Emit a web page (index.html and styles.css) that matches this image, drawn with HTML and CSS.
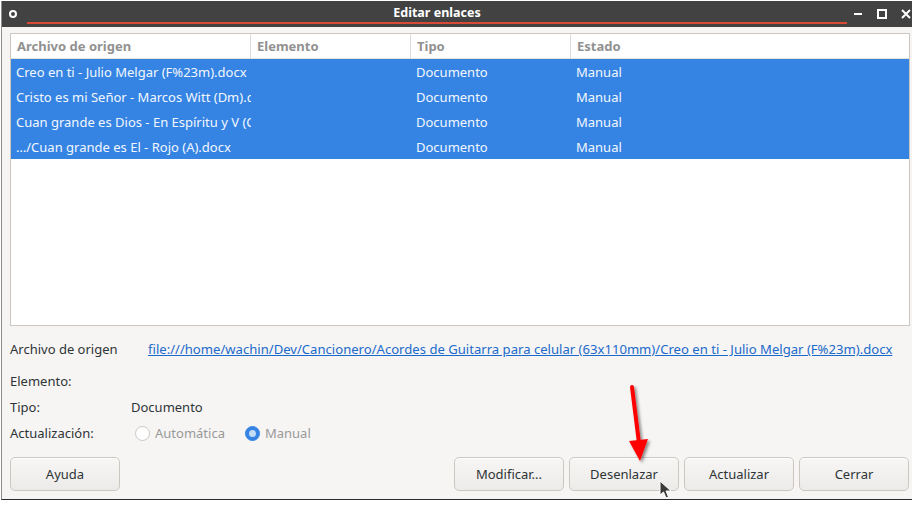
FILE: index.html
```html
<!DOCTYPE html>
<html lang="es">
<head>
<meta charset="utf-8">
<title>Editar enlaces</title>
<link rel="stylesheet" href="styles.css">
</head>
<body>
<div class="window">
  <div class="titlebar">
    <svg class="tb-icon" width="10" height="10" viewBox="0 0 10 10"><circle cx="5" cy="5" r="3" fill="none" stroke="#fff" stroke-width="2"/></svg>
    <div class="title">Editar enlaces</div>
    <div class="tb-controls">
      <svg width="10" height="10" viewBox="0 0 10 10"><rect x="1" y="4" width="8" height="2" fill="#fff"/></svg>
      <svg width="10" height="10" viewBox="0 0 10 10"><rect x="1" y="1" width="8" height="8" fill="none" stroke="#fff" stroke-width="2"/></svg>
      <svg width="10" height="10" viewBox="0 0 10 10"><path d="M1 1L9 9M9 1L1 9" stroke="#fff" stroke-width="2"/></svg>
    </div>
    <div class="tb-underline"></div>
  </div>

  <div class="content">
    <div class="table">
      <div class="thead">
        <div class="th c1">Archivo de origen</div>
        <div class="th c2">Elemento</div>
        <div class="th c3">Tipo</div>
        <div class="th c4">Estado</div>
      </div>
      <div class="row">
        <div class="td c1">Creo en ti - Julio Melgar (F%23m).docx</div>
        <div class="td c2"></div>
        <div class="td c3">Documento</div>
        <div class="td c4">Manual</div>
      </div>
      <div class="row">
        <div class="td c1">Cristo es mi Señor - Marcos Witt (Dm).docx</div>
        <div class="td c2"></div>
        <div class="td c3">Documento</div>
        <div class="td c4">Manual</div>
      </div>
      <div class="row">
        <div class="td c1">Cuan grande es Dios - En Espíritu y V (C).docx</div>
        <div class="td c2"></div>
        <div class="td c3">Documento</div>
        <div class="td c4">Manual</div>
      </div>
      <div class="row">
        <div class="td c1">…/Cuan grande es El - Rojo (A).docx</div>
        <div class="td c2"></div>
        <div class="td c3">Documento</div>
        <div class="td c4">Manual</div>
      </div>
    </div>

    <div class="details">
      <div class="drow source">
        <span class="label">Archivo de origen</span>
        <a class="link" href="#">file:///home/wachin/Dev/Cancionero/Acordes de Guitarra para celular (63x110mm)/Creo en ti - Julio Melgar (F%23m).docx</a>
      </div>
      <div class="drow"><span class="label">Elemento:</span></div>
      <div class="drow"><span class="label">Tipo:</span><span class="value">Documento</span></div>
      <div class="drow"><span class="label">Actualización:</span>
        <span class="radio"><span class="rb"></span>Automática</span>
        <span class="radio"><span class="rb on"></span>Manual</span>
      </div>
    </div>

    <div class="buttons">
      <button class="btn">Ayuda</button>
      <div class="spacer"></div>
      <button class="btn">Modificar...</button>
      <button class="btn">Desenlazar</button>
      <button class="btn">Actualizar</button>
      <button class="btn">Cerrar</button>
    </div>
  </div>

  <svg class="arrow" width="40" height="90" viewBox="0 0 40 90">
    <defs><filter id="sh" x="-50%" y="-50%" width="200%" height="200%"><feDropShadow dx="2" dy="2" stdDeviation="1.5" flood-color="#000" flood-opacity="0.45"/></filter></defs>
    <g filter="url(#sh)">
      <path d="M11 2 L18 58" stroke="#f00" stroke-width="4" stroke-linecap="round"/>
      <path d="M8 56 L27 54 L19 76 Z" fill="#f00"/>
    </g>
  </svg>
  <svg class="cursor" width="14" height="20" viewBox="0 0 14 20">
    <path d="M1 1 L1 15 L4.5 12 L7 18 L9.5 17 L7 11 L12 11 Z" fill="#3a3a3a" stroke="#fff" stroke-width="1"/>
  </svg>
</div>
</body>
</html>
```
FILE: styles.css
```css
* { box-sizing: border-box; }
html, body { margin: 0; padding: 0; background: #ffffff; }
body {
  font-family: "Noto Sans", "Open Sans", sans-serif;
  font-size: 13px;
  color: #2e3436;
  width: 913px;
  height: 511px;
  overflow: hidden;
}
.window {
  position: relative;
  margin: 1px 0 0 1px;
  width: 911px;
  height: 499px;
  background: #f6f5f4;
  border-left: 1px solid #8c8c8c;
  border-bottom: 1px solid #2b2b2b;
}
.titlebar {
  position: relative;
  height: 26px;
  background: #424242;
  display: flex;
  align-items: center;
  color: #fff;
}
.tb-icon { margin-left: 6px; }
.title {
  position: absolute;
  left: 0; right: 40px; top: 0;
  height: 24px;
  line-height: 24px;
  text-align: center;
  font-weight: bold;
  font-size: 12.5px;
  pointer-events: none;
}
.tb-controls {
  margin-left: auto;
  display: flex;
  gap: 14px;
  margin-right: 1px;
}
.tb-underline {
  position: absolute;
  left: 25px;
  width: 820px;
  top: 21px;
  height: 2px;
  background: #d84a36;
}
.content {
  padding: 6px 2px 0 8px;
}
.table {
  width: 900px;
  height: 293px;
  background: #fff;
  border: 1px solid #cdc7c2;
}
.thead {
  display: flex;
  height: 25px;
  border-bottom: 1px solid #e2e0dd;
}
.th {
  font-weight: bold;
  color: #919191;
  padding-left: 6px;
  line-height: 24px;
  border-right: 1px solid #dedbd8;
}
.th.c4 { border-right: none; }
.c1 { width: 240px; }
.c2 { width: 160px; }
.c3 { width: 160px; }
.c4 { flex: 1; }
.row {
  display: flex;
  height: 25px;
  background: #3584e4;
  color: #f3f7fc;
}
.td {
  line-height: 26px;
  padding-left: 5px;
  white-space: nowrap;
  overflow: hidden;
}
.td.c1 { padding-right: 2px; text-overflow: clip; }
.details {
  padding-top: 11px;
}
.drow {
  display: flex;
  align-items: center;
  height: 26px;
}
.drow.source { height: 24px; margin-bottom: 7px; }
.label { width: 121px; flex: none; }
.source .label { width: 138px; }
.link {
  color: #1b6acb;
  text-decoration: underline;
  white-space: nowrap;
  font-size: 13.1px;
}
.value { color: #2e3436; }
.radio {
  display: inline-flex;
  align-items: center;
  color: #999;
  margin-right: 20px;
  margin-left: 4px;
}
.radio + .radio { margin-left: 0; }
.rb {
  width: 15px;
  height: 15px;
  border-radius: 50%;
  border: 1px solid #cdc7c2;
  background: #fff;
  margin-right: 5px;
}
.rb.on {
  background: #3584e4;
  border-color: #3584e4;
  position: relative;
}
.rb.on::after {
  content: "";
  position: absolute;
  left: 3px; top: 3px;
  width: 7px; height: 7px;
  border-radius: 50%;
  background: #c5dcf7;
}
.buttons {
  display: flex;
  gap: 5px;
  margin-top: 11px;
  padding-right: 1px;
}
.spacer { flex: 1; }
.btn {
  width: 110px;
  height: 34px;
  font-family: inherit;
  font-size: 13px;
  color: #2e3436;
  border: 1px solid #cdc7c2;
  border-radius: 5px;
  background: linear-gradient(#f7f6f5, #edebe9);
  box-shadow: inset 0 1px #fff;
}
.arrow {
  position: absolute;
  left: 619px;
  top: 384px;
}
.cursor {
  position: absolute;
  left: 657px;
  top: 479px;
}
```
